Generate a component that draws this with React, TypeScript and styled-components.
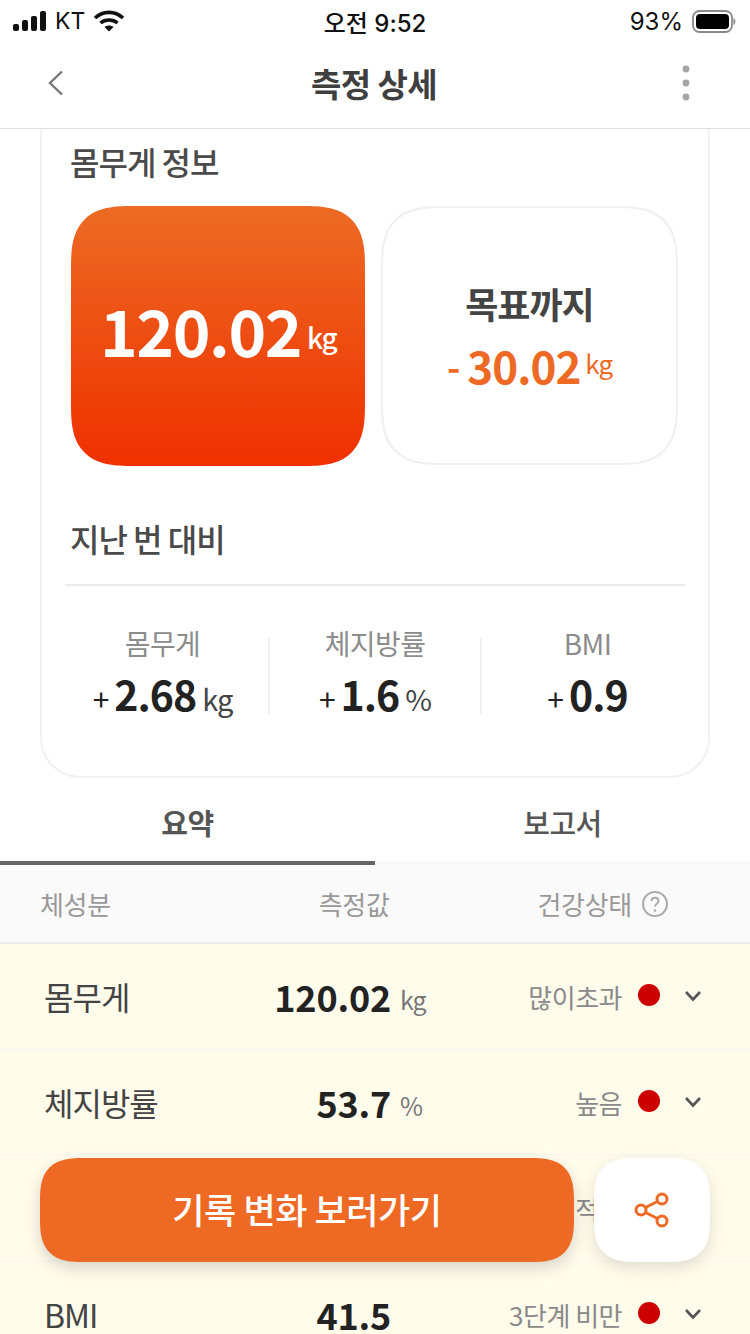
import React from "react";
import styled, { createGlobalStyle, css } from "styled-components";

////////////////////////////////////////////////////////////////////////////////
// Data
////////////////////////////////////////////////////////////////////////////////
const compare = [
  { label: "몸무게", value: "2.68", unit: "kg" },
  { label: "체지방률", value: "1.6", unit: "%" },
  { label: "BMI", value: "0.9", unit: "" },
];

// The third row sits behind the floating button, only its status shows.
const rows = [
  { id: "weight", name: "몸무게", value: "120.02", unit: "kg", status: "많이초과" },
  { id: "fat", name: "체지방률", value: "53.7", unit: "%", status: "높음" },
  { id: "hidden", name: "", value: "", unit: "", status: "적정" },
  { id: "bmi", name: "BMI", value: "41.5", unit: "", status: "3단계 비만" },
];

////////////////////////////////////////////////////////////////////////////////
// Styles
////////////////////////////////////////////////////////////////////////////////
const Global = createGlobalStyle`
  html, body {
    margin: 0;
    padding: 0;
    background: #fff;
  }
  * {
    box-sizing: border-box;
  }
`;

const squircle = (radius: number) => css`
  @supports (corner-shape: squircle) {
    border-radius: ${radius}px;
    corner-shape: superellipse(1.5);
  }
`;

const Page = styled.div`
  position: relative;
  width: 750px;
  height: 1334px;
  overflow: hidden;
  display: flex;
  flex-direction: column;
  background: #fff;
  font-family: "Noto Sans CJK KR", sans-serif;
  color: #444;
`;

const StatusBar = styled.div`
  height: 42px;
  flex: none;
  display: grid;
  grid-template-columns: 1fr auto 1fr;
  align-items: center;
  padding: 0 14px 0 13px;
  font-family: Inter, "Noto Sans CJK KR", sans-serif;
  font-size: 24px;
  color: #111;
`;

const StatusLeft = styled.div`
  display: flex;
  align-items: center;
  gap: 8px;
`;

const Carrier = styled.span`
  font-size: 23px;
  font-weight: 400;
`;

const Clock = styled.div`
  font-size: 24px;
  font-weight: 500;
  margin-left: 1px;
`;

const StatusRight = styled.div`
  display: flex;
  align-items: center;
  justify-content: flex-end;
  gap: 9px;
`;

const NavBar = styled.header`
  height: 87px;
  flex: none;
  display: flex;
  align-items: center;
  justify-content: space-between;
  padding: 0 60px 4px 46px;
  border-bottom: 1px solid #dfdfdf;
  position: relative;
  z-index: 1;
  background: #fff;
`;

const NavTitle = styled.h1`
  margin: 0;
  font-size: 33px;
  font-weight: 700;
  color: #3f3f3f;
  letter-spacing: -0.6px;
`;

const Content = styled.main`
  flex: 1;
  overflow: hidden;
`;

const Card = styled.section`
  margin: -32px 40px 0;
  height: 681px;
  border: 2px solid #f1f1f1;
  border-radius: 40px;
  padding: 40px 23px 0;
  background: #fff;
`;

const CardTitle = styled.h2`
  margin: 0;
  padding-left: 5px;
  font-size: 32px;
  line-height: 44px;
  font-weight: 500;
  color: #4a4a4a;
  letter-spacing: -1px;
`;

const Tiles = styled.div`
  margin: 23px 7px 0 6px;
  display: flex;
  justify-content: space-between;
  align-items: flex-start;
`;

const MainTile = styled.div`
  width: 294px;
  height: 260px;
  border-radius: 46px;
  ${squircle(62)}
  background: linear-gradient(180deg, #ec6b25 0%, #f03000 100%);
  display: flex;
  align-items: center;
  justify-content: center;
  color: #fff;
  padding-bottom: 14px;
`;

const BigValue = styled.span`
  font-size: 64px;
  font-weight: 700;
  letter-spacing: -1.4px;
`;

const TileUnit = styled.span`
  font-size: 28px;
  font-weight: 500;
  letter-spacing: -1.5px;
  margin-left: 6px;
  margin-top: 16px;
`;

const GoalTile = styled.div`
  width: 297px;
  height: 259px;
  border: 2px solid #f0f0f0;
  border-radius: 46px;
  ${squircle(62)}
  display: flex;
  flex-direction: column;
  align-items: center;
  justify-content: center;
`;

const GoalLabel = styled.div`
  font-size: 36px;
  line-height: 50px;
  font-weight: 700;
  color: #444;
  letter-spacing: -1px;
`;

const GoalValue = styled.div`
  display: flex;
  align-items: center;
  margin-top: 9px;
  height: 56px;
  color: #ee6a24;
`;

const GoalSign = styled.span`
  font-size: 36px;
  font-weight: 700;
  margin-right: 7px;
`;

const GoalNumber = styled.span`
  font-size: 44px;
  font-weight: 700;
  letter-spacing: -1px;
`;

const GoalUnit = styled.span`
  font-size: 26px;
  font-weight: 400;
  letter-spacing: -1px;
  margin-left: 5px;
  margin-top: -6px;
`;

const CompareHead = styled.div`
  margin-top: 50px;
  padding-bottom: 24px;
  border-bottom: 2px solid #ececec;
`;

const CompareRow = styled.div`
  margin-top: 52px;
  display: grid;
  grid-template-columns: 203px 212px 205px;
`;

const CompareCell = styled.div<{ $divider?: boolean }>`
  height: 76px;
  display: flex;
  flex-direction: column;
  align-items: center;
  justify-content: flex-start;
  border-left: ${(p) => (p.$divider ? "2px solid #f0f0f0" : "none")};
  &:first-child {
    padding-right: 8px;
  }
  &:last-child {
    padding-left: 8px;
  }
`;

const CompareLabel = styled.div`
  margin-top: -16px;
  font-size: 28px;
  line-height: 42px;
  color: #8c8c8c;
  letter-spacing: -0.6px;
`;

const CompareValue = styled.div`
  display: flex;
  align-items: baseline;
  margin-top: 3px;
  color: #222;
`;

const Sign = styled.span`
  font-size: 30px;
  margin-right: 5px;
`;

const CompareNumber = styled.span`
  font-size: 41px;
  line-height: 52px;
  font-weight: 700;
  letter-spacing: -1px;
`;

const CompareUnit = styled.span`
  font-size: 29px;
  letter-spacing: -1px;
  margin-left: 6px;
  color: #444;
`;

const Tabs = styled.nav`
  display: flex;
  height: 87px;
  background: #fff;
`;

const Tab = styled.div<{ $active?: boolean }>`
  flex: 1;
  display: flex;
  align-items: center;
  justify-content: center;
  padding-top: 4px;
  border-bottom: 4px solid ${(p) => (p.$active ? "#666" : "#f7f7f7")};
  font-size: 29px;
  font-weight: ${(p) => (p.$active ? 700 : 500)};
  color: #555;
  letter-spacing: -0.5px;
`;

const TableHead = styled.div`
  height: 79px;
  display: flex;
  align-items: center;
  justify-content: space-between;
  padding: 0 81px 0 40px;
  background: #fafafa;
  border-bottom: 2px solid #eee;
  font-size: 26px;
  color: #999;
  letter-spacing: -0.3px;
`;

const HeadCenter = styled.span`
  margin-left: 60px;
`;

const HeadStatus = styled.span`
  display: flex;
  align-items: center;
  gap: 9px;
`;

const Row = styled.div`
  height: 106px;
  display: grid;
  grid-template-columns: 150px 197px 1fr;
  align-items: center;
  padding: 0 48px 0 44px;
  background: #fffcec;
  border-bottom: 2px solid #fbf9ef;
`;

const RowName = styled.div`
  font-size: 32px;
  color: #444;
  letter-spacing: -1px;
  white-space: nowrap;
`;

const RowValue = styled.div`
  display: flex;
  align-items: baseline;
  color: #222;
  justify-content: flex-end;
  position: relative;
`;

const RowNumber = styled.span`
  font-size: 36px;
  font-weight: 700;
  letter-spacing: -0.2px;
`;

const RowUnit = styled.span`
  position: absolute;
  left: 100%;
  margin-left: 9px;
  bottom: 5px;
  font-size: 25px;
  letter-spacing: -1px;
  color: #777;
`;

const RowStatus = styled.div`
  display: flex;
  align-items: center;
  justify-content: flex-end;
`;

const StatusText = styled.span`
  font-size: 26px;
  color: #8a8a8a;
  letter-spacing: -0.5px;
`;

const Dot = styled.span`
  width: 22px;
  height: 22px;
  margin: 0 24px 2px 16px;
  border-radius: 50%;
  background: #cc0000;
`;

const FloatBar = styled.div`
  position: absolute;
  left: 40px;
  right: 40px;
  bottom: 72px;
  display: flex;
  gap: 20px;
`;

const MainButton = styled.button`
  flex: 1;
  height: 104px;
  border: none;
  border-radius: 34px;
  ${squircle(44)}
  background: #ee6a24;
  color: #fff;
  font-family: inherit;
  font-size: 35px;
  font-weight: 500;
  letter-spacing: -0.4px;
  padding-bottom: 4px;
  box-shadow: 0 6px 16px rgba(0, 0, 0, 0.16);
`;

const ShareButton = styled.button`
  width: 116px;
  height: 104px;
  border: none;
  border-radius: 34px;
  ${squircle(44)}
  background: #fff;
  display: flex;
  align-items: center;
  justify-content: center;
  box-shadow: 0 6px 16px rgba(0, 0, 0, 0.12);
`;

////////////////////////////////////////////////////////////////////////////////
// Icons
////////////////////////////////////////////////////////////////////////////////
const SignalIcon = () => (
  <svg width="34" height="20" viewBox="0 0 34 20" fill="#111">
    <rect x="0" y="13" width="6" height="7" rx="2" />
    <rect x="9" y="9" width="6" height="11" rx="2" />
    <rect x="18" y="5" width="6" height="15" rx="2" />
    <rect x="27" y="0" width="6" height="20" rx="2" />
  </svg>
);

const WifiIcon = () => (
  <svg width="32" height="22" viewBox="0 0 32 22" fill="none" stroke="#111" strokeWidth="3.6">
    <path d="M2 8 C10 0.5 22 0.5 30 8" />
    <path d="M7.5 13 C12 9 20 9 24.5 13" />
    <path d="M16 21.5 L11.5 17 C14 15 18 15 20.5 17 Z" fill="#111" stroke="none" />
  </svg>
);

const BatteryIcon = () => (
  <svg width="44" height="23" viewBox="0 0 44 23">
    <rect x="1" y="1" width="39" height="21" rx="6.5" fill="none" stroke="#8a8a8a" strokeWidth="1.8" />
    <rect x="4" y="4" width="33" height="15" rx="4" fill="#000" />
    <path d="M41.5 8 C44 9 44 14 41.5 15 Z" fill="#8a8a8a" />
  </svg>
);

const BackIcon = () => (
  <svg width="20" height="28" viewBox="0 0 20 28" fill="none" stroke="#777" strokeWidth="2.4">
    <path d="M16 2.5 L4 14 L16 25.5" />
  </svg>
);

const MoreIcon = () => (
  <svg width="8" height="36" viewBox="0 0 8 36" fill="#a5a5a5">
    <circle cx="4" cy="4" r="3.4" />
    <circle cx="4" cy="18" r="3.4" />
    <circle cx="4" cy="32" r="3.4" />
  </svg>
);

const HelpIcon = () => (
  <svg width="28" height="28" viewBox="0 0 28 28" fill="none" stroke="#aaa" strokeWidth="2">
    <circle cx="14" cy="14" r="12" />
    <path d="M10.5 11 C10.5 6.8 17.5 6.8 17.5 11 C17.5 13.8 14 13.8 14 16.5" />
    <circle cx="14" cy="20.5" r="1.2" fill="#aaa" stroke="none" />
  </svg>
);

const ChevronIcon = () => (
  <svg width="18" height="12" viewBox="0 0 18 12" fill="none" stroke="#555" strokeWidth="2.6">
    <path d="M2 2 L9 9.5 L16 2" />
  </svg>
);

const ShareIcon = () => (
  <svg width="36" height="36" viewBox="0 0 36 36" fill="none" stroke="#ee6a24" strokeWidth="3">
    <circle cx="28" cy="7" r="5" />
    <circle cx="7" cy="18" r="5" />
    <circle cx="28" cy="29" r="5" />
    <path d="M11.5 15.5 L23.5 9.5 M11.5 20.5 L23.5 26.5" />
  </svg>
);

////////////////////////////////////////////////////////////////////////////////
// Export
////////////////////////////////////////////////////////////////////////////////
const App: React.FC = () => {
  return (
    <Page>
      <Global />
      <StatusBar>
        <StatusLeft>
          <SignalIcon />
          <Carrier>KT</Carrier>
          <WifiIcon />
        </StatusLeft>
        <Clock>오전 9:52</Clock>
        <StatusRight>
          93%
          <BatteryIcon />
        </StatusRight>
      </StatusBar>
      <NavBar>
        <BackIcon />
        <NavTitle>측정 상세</NavTitle>
        <MoreIcon />
      </NavBar>
      <Content>
        <Card>
          <CardTitle>몸무게 정보</CardTitle>
          <Tiles>
            <MainTile>
              <BigValue>120.02</BigValue>
              <TileUnit>kg</TileUnit>
            </MainTile>
            <GoalTile>
              <GoalLabel>목표까지</GoalLabel>
              <GoalValue>
                <GoalSign>-</GoalSign>
                <GoalNumber>30.02</GoalNumber>
                <GoalUnit>kg</GoalUnit>
              </GoalValue>
            </GoalTile>
          </Tiles>
          <CompareHead>
            <CardTitle>지난 번 대비</CardTitle>
          </CompareHead>
          <CompareRow>
            {compare.map((item, i) => (
              <CompareCell key={item.label} $divider={i > 0}>
                <CompareLabel>{item.label}</CompareLabel>
                <CompareValue>
                  <Sign>+</Sign>
                  <CompareNumber>{item.value}</CompareNumber>
                  {item.unit && <CompareUnit>{item.unit}</CompareUnit>}
                </CompareValue>
              </CompareCell>
            ))}
          </CompareRow>
        </Card>
        <Tabs>
          <Tab $active>요약</Tab>
          <Tab>보고서</Tab>
        </Tabs>
        <TableHead>
          <span>체성분</span>
          <HeadCenter>측정값</HeadCenter>
          <HeadStatus>
            건강상태
            <HelpIcon />
          </HeadStatus>
        </TableHead>
        {rows.map((row) => (
          <Row key={row.id}>
            <RowName>{row.name}</RowName>
            <RowValue>
              <RowNumber>{row.value}</RowNumber>
              {row.unit && <RowUnit>{row.unit}</RowUnit>}
            </RowValue>
            <RowStatus>
              <StatusText>{row.status}</StatusText>
              <Dot />
              <ChevronIcon />
            </RowStatus>
          </Row>
        ))}
      </Content>
      <FloatBar>
        <MainButton>기록 변화 보러가기</MainButton>
        <ShareButton>
          <ShareIcon />
        </ShareButton>
      </FloatBar>
    </Page>
  );
};

export default App;
